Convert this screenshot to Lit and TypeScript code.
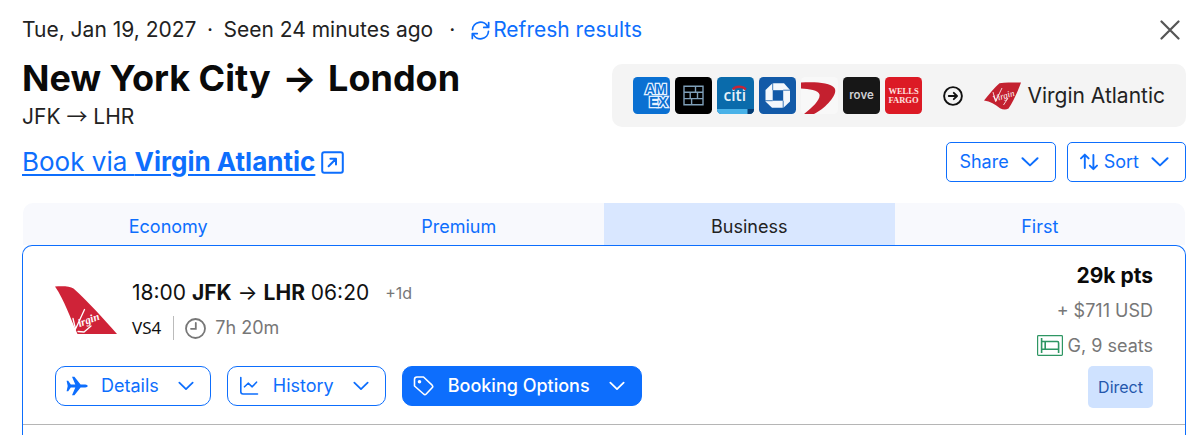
import { LitElement, html, css, svg } from "lit";
import { customElement, state } from "lit/decorators.js";

const chevron = html`<svg class="chev" viewBox="0 0 18 10" width="18" height="10" aria-hidden="true">
  <path d="M1.5 1.2 9 8.4l7.5-7.2" fill="none" stroke="currentColor" stroke-width="2" stroke-linecap="round" stroke-linejoin="round" />
</svg>`;

const tile = (name: string, body: unknown) => html`<svg class="tile" viewBox="0 0 37 37" width="37" height="37" role="img" aria-label=${name}>${body}</svg>`;

const banks = [
  tile("American Express", svg`
    <defs><clipPath id="amex"><rect width="37" height="37" rx="4.5" /></clipPath></defs>
    <g clip-path="url(#amex)">
      <rect width="37" height="37" fill="#0a70d2" />
      <text font-family="Liberation Sans, sans-serif" font-weight="700" font-size="14" fill="#0a70d2" stroke="#e4f1ff" stroke-width="2.600" paint-order="stroke"><tspan x="12" y="16.600">AM</tspan><tspan x="16" y="30">EX</tspan></text>
    </g>`),
  tile("Bilt", svg`
    <rect width="37" height="37" rx="4.5" fill="#000" />
    <g fill="none" stroke="#7f9fb8" stroke-width="1.4">
      <path d="M9 9.2h19v18.6H9zM9 15.3h19M9 21.6h19M20.5 9.2v6.1M15.2 15.3v6.3M22.5 15.3v6.3M16.6 21.6v6.2" />
    </g>`),
  tile("Citi", svg`
    <defs><clipPath id="citi"><rect width="37" height="37" rx="4.5" /></clipPath></defs>
    <g clip-path="url(#citi)">
      <rect width="37" height="37" fill="#0a6bab" />
      <rect y="32" width="31" height="5" fill="#49b2e8" />
      <rect x="30.5" y="32" width="6.5" height="5" fill="#063b72" />
      <text x="6.5" y="24" font-family="Open Sans, sans-serif" font-weight="600" font-size="15.5" fill="#e6f1f8">citi</text>
      <path d="M15.800 12.600c3-3.800 9.800-3.800 13 0" fill="none" stroke="#c2263a" stroke-width="2.400" />
    </g>`),
  tile("Chase", svg`
    <rect width="37" height="37" rx="4.5" fill="#125aa8" />
    <path fill="#f4f8fc" d="M13.500 6.200h11.500l6 6.800v11.500l-6.500 6.300H13l-6.500-6.300V13z" />
    <path d="M13.700 13.200h10.500v10.500H13.700z" fill="#125aa8" />
    <path d="M24.200 13.200h7M24.200 23.700v7.500M13.700 23.700h-7.500M13.700 13.200V6" stroke="#125aa8" stroke-width=".8" />`),
  tile("Capital One", svg`
    <defs><clipPath id="cap"><rect width="37" height="37" rx="4.500" /></clipPath></defs>
    <g clip-path="url(#cap)">
      <rect width="37" height="37" fill="#f8f8f8" />
      <path d="M0 5.500C14 4.500 29 5.500 33.500 11 37.500 17 25 31 13 37H3C12 30 19.500 22.500 18.500 17.500 17.500 12.800 8 12 0 11.500z" fill="#c4202f" />
    </g>`),
  tile("Rove", svg`
    <rect width="37" height="37" rx="4.500" fill="#171717" />
    <text x="18.500" y="22" text-anchor="middle" font-family="Inter, sans-serif" font-weight="600" font-size="11.500" fill="#cfcfd2">rove</text>`),
  tile("Wells Fargo", svg`
    <rect width="37" height="37" rx="4.500" fill="#dc1a25" />
    <g text-anchor="middle" font-family="Liberation Serif, serif" font-weight="700" font-size="8.500" fill="#ffe3e0">
      <text x="18.500" y="17">WELLS</text>
      <text x="18.500" y="26">FARGO</text>
    </g>`),
];

const tabs = ["Economy", "Premium", "Business", "First"];

@customElement("app-root")
export class AppRoot extends LitElement {
  @state() private cabin = "Business";

  static styles = css`
    :host {
      --blue: #0d6efd;
      box-sizing: border-box;
      display: flex;
      flex-direction: column;
      min-height: 100vh;
      padding: 14px 14px 0 22px;
      background: #fff;
      color: #111;
      font: 400 18px/24px Inter, "Liberation Sans", sans-serif;
    }
    * { box-sizing: border-box; }
    svg { display: block; flex: none; }
    button { font: inherit; cursor: pointer; margin: 0; }
    h1, p { margin: 0; }
    .top, .hero, .booking, .line, .actions, .tools, .transfer, .tiles, .seats { display: flex; align-items: center; }
    .top { justify-content: space-between; font-size: 21px; line-height: 32px; color: #222; }
    .info { display: flex; }
    .dot { width: 27px; text-align: center; }
    .dot.wide { width: 38px; }
    .refresh { display: flex; align-items: center; gap: 3px; color: var(--blue); text-decoration: none; }
    .close { display: flex; padding: 0; margin-right: 6px; border: 0; background: none; color: #555; }
    .hero { justify-content: space-between; align-items: flex-end; margin-top: 9px; }
    h1 { font-size: 36px; line-height: 46px; font-weight: 700; color: #0a0a0a; }
    .arrow { margin: 0 3px; }
    .codes { font-size: 21px; line-height: 32px; color: #222; }
    .thin { font-family: "Noto Sans CJK SC", sans-serif; line-height: 0; }
    .transfer { margin-bottom: 6px; padding: 13px 21px; gap: 21px; border-radius: 10px; background: #f4f4f4; font-size: 21px; color: #222; }
    .tiles { gap: 5px; }
    .partner { display: flex; align-items: center; gap: 6px; }
    .booking { justify-content: space-between; margin-top: 9px; }
    .book { display: flex; align-items: center; gap: 6px; font-size: 26px; line-height: 40px; color: var(--blue); text-decoration: none; }
    .book b { font-weight: 700; }
    .book span { text-decoration: underline; text-decoration-thickness: 2px; text-underline-offset: 3px; }
    .tools { gap: 11px; }
    .btn { display: flex; align-items: center; height: 40px; border: 1px solid var(--blue); color: var(--blue); background: #fff; }
    .tool { padding: 0 16px 0 12px; border-radius: 5px; gap: 12px; }
    .sortlabel { display: flex; align-items: center; gap: 6px; }
    .tabs { display: grid; grid-template-columns: repeat(4, 1fr); height: 42px; margin: 21px 1px 0; border-radius: 10px 10px 0 0; overflow: hidden; background: #f8f9fd; }
    .tab { border: 0; padding: 5px 0 0; background: none; color: var(--blue); }
    .tab.on { background: #d9e7ff; color: #222; }
    .card { flex: 1; border: 1px solid var(--blue); border-bottom: 0; border-radius: 10px 10px 0 0; }
    .flight { display: flex; justify-content: space-between; padding: 12px 32px 16px; border-bottom: 1px solid #b5b5b5; }
    .left { padding-top: 17px; }
    .summary { display: flex; align-items: center; gap: 15px; }
    .times { font-size: 21px; line-height: 36px; gap: 16px; color: #111; }
    .plus { font-size: 16px; color: #777; }
    .meta { line-height: 34px; color: #777; gap: 9px; }
    .num { font-family: "Noto Sans", "Open Sans", sans-serif; font-size: 17px; color: #111; padding-right: 12px; line-height: 24px; border-right: 1px solid #bbb; margin-right: 2px; }
    .actions { gap: 16px; margin-top: 21px; }
    .act { border-radius: 10px; padding: 0 16px 0 10px; gap: 13px; }
    .act .chev { width: 16px; margin-left: 6px; }
    .act.solid { background: var(--blue); color: #fff; font-weight: 500; }
    .right { display: flex; flex-direction: column; align-items: flex-end; line-height: 35px; color: #777; }
    .pts { font-size: 21px; font-weight: 700; color: #0a0a0a; }
    .seats { gap: 5px; }
    .direct { margin-top: 3px; height: 42px; padding: 0 10px; border: 0; border-radius: 5px; background: #cfe2ff; color: #2457ac; font-size: 16px; }
  `;

  render() {
    return html`
      <div class="top">
        <div class="info">
          <span>Tue, Jan 19, 2027</span><span class="dot">·</span>
          <span>Seen 24 minutes ago</span><span class="dot wide">·</span>
          <a class="refresh" href="#refresh">
            <svg viewBox="0 0 20 20" width="19" height="19" aria-hidden="true" fill="none" stroke="currentColor" stroke-width="1.800" stroke-linecap="round" stroke-linejoin="round">
              <path d="M1.600 9.200A8.400 8.400 0 0 1 17.700 6.300M18.600 1.600v5.200h-5.200M18.400 10.800A8.400 8.400 0 0 1 2.300 13.700M1.400 18.400v-5.200h5.200" />
            </svg>Refresh results</a>
        </div>
        <button class="close" aria-label="Close">
          <svg viewBox="0 0 20 20" width="20" height="20"><path d="m1.500 1.500 17 17M18.500 1.500l-17 17" stroke="currentColor" stroke-width="2.200" stroke-linecap="round" /></svg>
        </button>
      </div>

      <div class="hero">
        <div>
          <h1>New York City <span class="arrow">→</span> London</h1>
          <p class="codes">JFK <span class="thin">→</span> LHR</p>
        </div>
        <div class="transfer">
          <div class="tiles">${banks}</div>
          <svg viewBox="0 0 20 20" width="20" height="20" aria-hidden="true" fill="none" stroke="#111" stroke-width="1.900" stroke-linecap="round" stroke-linejoin="round">
            <circle cx="10" cy="10" r="8.900" /><path d="M5.800 10h8M10.800 6.800 14 10l-3.200 3.200" />
          </svg>
          <div class="partner">
            <svg viewBox="0 0 37 28" width="37" height="28" aria-hidden="true">
              <path d="M0 18.500C6 11 11 5 15.500 1.200 22 .4 30 .6 37 .5 34 9 29 20 24.500 26.500c-2.500 1.500-5.500 1.300-8.500-.2C11 22.500 6.500 19.500 0 18.500z" fill="#c3202f" />
              <text x="10" y="20" transform="rotate(-17 10 20)" font-family="Liberation Serif, serif" font-style="italic" font-size="9" fill="#fff">Virgin</text>
              <path d="m9 10 2.500 9.500L18 6M24 16l-4.500 7" fill="none" stroke="#fff" stroke-width=".8" />
            </svg>
            <span>Virgin Atlantic</span>
          </div>
        </div>
      </div>

      <div class="booking">
        <a class="book" href="#book"><span>Book via <b>Virgin Atlantic</b></span>
          <svg viewBox="0 0 23 23" width="23" height="23" aria-hidden="true" fill="none" stroke="currentColor" stroke-width="2" stroke-linecap="round" stroke-linejoin="round">
            <rect x="1.200" y="1.200" width="20.600" height="20.600" rx="2" /><path d="m7.600 15.200 7.200-7.200M9.400 7.800h5.600v5.600" />
          </svg></a>
        <div class="tools">
          <button class="btn tool">Share ${chevron}</button>
          <button class="btn tool">
            <span class="sortlabel">
              <svg viewBox="0 0 18 18" width="18" height="18" aria-hidden="true" fill="none" stroke="currentColor" stroke-width="1.900" stroke-linecap="round" stroke-linejoin="round">
                <path d="M4.800 15V1.800M1 5.400l3.800-3.800 3.800 3.800M13.400 2v14M9.800 12.600l3.600 3.600 3.600-3.600" />
              </svg>Sort</span>${chevron}
          </button>
        </div>
      </div>

      <div class="tabs" role="tablist">
        ${tabs.map((t) => html`<button role="tab" class="tab ${t === this.cabin ? "on" : ""}" aria-selected=${t === this.cabin} @click=${() => (this.cabin = t)}>${t}</button>`)}
      </div>

      <section class="card">
        <article class="flight">
          <div class="left">
            <div class="summary">
              <svg viewBox="0 0 62 48" width="62" height="48" role="img" aria-label="Virgin Atlantic tail">
                <path d="M0 .5C8 0 15 .2 18.500 2.500 33 15.500 49 33 62 48H22.500C15 31 9.500 14.500 0 .5z" fill="#cf2338" />
                <text x="24.500" y="41" transform="rotate(-20 24.500 41)" font-family="Liberation Serif, serif" font-style="italic" font-weight="700" font-size="11" fill="#fff">irgin</text>
                <path d="m18 32.500 2.500 10.500L29.500 23.500M36 40l-7 6-6-.5" fill="none" stroke="#fff" stroke-width="1.300" stroke-linecap="round" />
              </svg>
              <div>
                <div class="line times"><span>18:00 <b>JFK</b> → <b>LHR</b> 06:20</span><span class="plus">+1d</span></div>
                <div class="line meta">
                  <span class="num">VS4</span>
                  <svg viewBox="0 0 21 21" width="21" height="21" aria-hidden="true" fill="none" stroke="currentColor" stroke-width="1.800">
                    <circle cx="10.500" cy="10.500" r="9.500" /><path d="M10.800 5v5.800H6" stroke-linecap="round" />
                  </svg>
                  <span>7h 20m</span>
                </div>
              </div>
            </div>
            <div class="actions">
              <button class="btn act">
                <svg viewBox="0 0 22 20" width="22" height="20" aria-hidden="true" fill="currentColor">
                  <path d="M.6 4.800h1.600l2.600 3.700h4.500L6 .8h2.400l6.200 7.700h4.600c1.500 0 2.500.8 2.500 1.500s-1 1.500-2.500 1.500h-4.600L8.400 19.200H6l3.300-7.700H4.800l-2.600 3.700H.6L1.700 10z" />
                </svg>Details ${chevron}</button>
              <button class="btn act">
                <svg viewBox="0 0 22 20" width="22" height="20" aria-hidden="true" fill="none" stroke="currentColor" stroke-width="1.600" stroke-linecap="round" stroke-linejoin="round">
                  <path d="M2.800 1.500v14.300c0 1.400.8 2.200 2.200 2.200h14.500M6.500 10.800l3.700-3.600 4 3.600 4.300-4.600" />
                </svg>History ${chevron}</button>
              <button class="btn act solid">
                <svg viewBox="0 0 22 20" width="22" height="20" aria-hidden="true" fill="none" stroke="currentColor" stroke-width="1.600" stroke-linejoin="round">
                  <path d="M1.500 3.500q0-2.500 2.500-2.500h6.500l8.600 8.200q1.300 1.300 0 2.600l-5.900 6.200q-1.300 1.300-2.600 0L1.500 10z" /><circle cx="6.500" cy="5.800" r="1" fill="currentColor" />
                </svg>Booking Options ${chevron}</button>
            </div>
          </div>
          <div class="right">
            <div class="pts">29k pts</div>
            <div>+ $711 USD</div>
            <div class="seats">
              <svg viewBox="0 0 26 21" width="26" height="21" role="img" aria-label="Lie-flat seat" fill="none" stroke="#2e9663" stroke-width="1.200">
                <rect x=".6" y=".6" width="24.800" height="19.800" rx=".8" />
                <path d="M4.600 3v15M4.600 6.500h15.800q1.200 0 1.200 1.500v10M4.600 14.200h17M8.200 6.500v7.700" stroke-width="1.600" />
              </svg><span>G, 9 seats</span>
            </div>
            <button class="direct">Direct</button>
          </div>
        </article>
      </section>
    `;
  }
}
